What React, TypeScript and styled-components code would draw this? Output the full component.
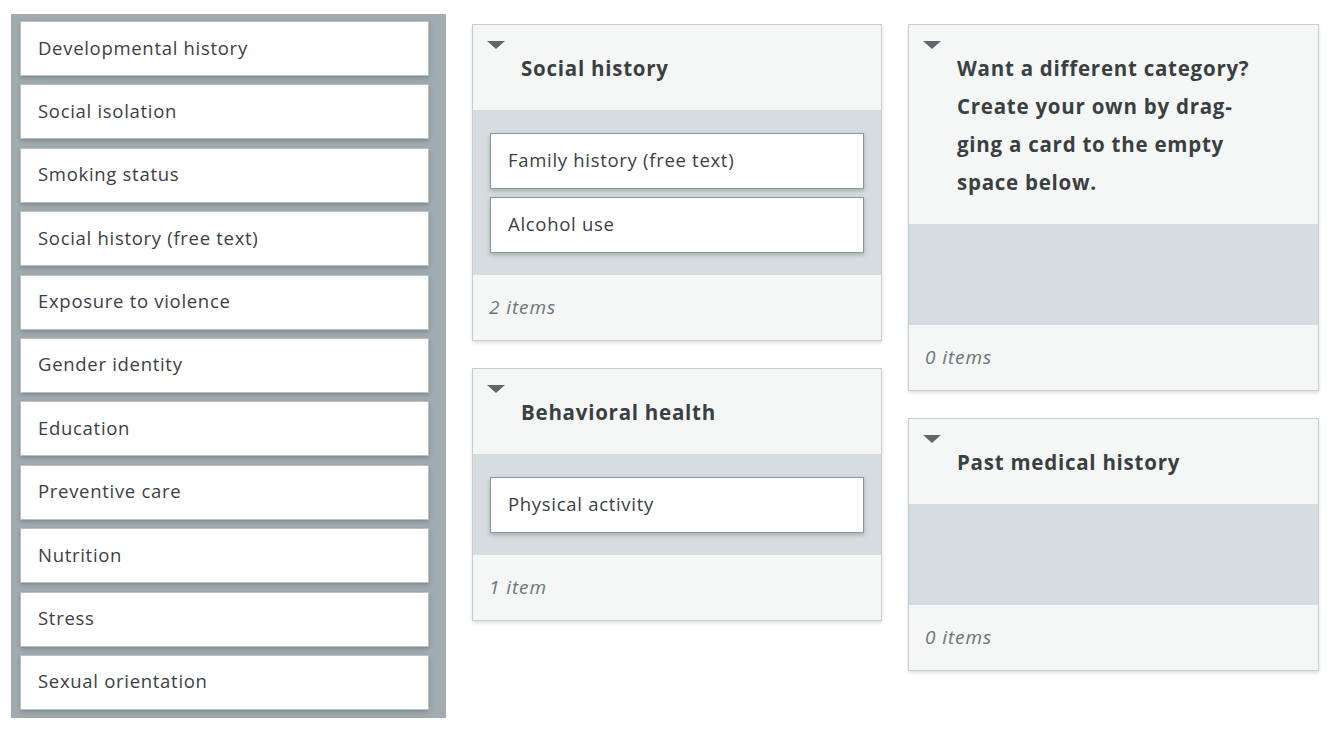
import React from "react";
import styled, { createGlobalStyle } from "styled-components";

const Global = createGlobalStyle`
  html, body { margin: 0; padding: 0; background: #ffffff; }
  body { font-family: "Open Sans", "Noto Sans", sans-serif; color: #3b4245; }
  * { box-sizing: border-box; }
`;

const Page = styled.div`
  display: flex;
  align-items: flex-start;
  gap: 26px;
  padding: 14px 0 0 11px;
  height: 738px;
  overflow: hidden;
`;

const Palette = styled.div`
  width: 435px;
  height: 704px;
  background: #a2acb0;
  padding: 7px 17px 0 9px;
  display: flex;
  flex-direction: column;
  gap: 8.4px;
  overflow: hidden;
  flex-shrink: 0;
`;

const ItemCard = styled.div<{ $inset?: boolean }>`
  flex-shrink: 0;
  height: ${(p) => (p.$inset ? 56 : 55)}px;
  background: #ffffff;
  border: 1px solid ${(p) => (p.$inset ? "#8d979b" : "#b7c0c4")};
  box-shadow: 0 2px 4px rgba(40, 50, 55, 0.28);
  display: flex;
  align-items: center;
  padding: 0 17px 3px;
  font-size: 18.5px;
  letter-spacing: 0.7px;
  color: #3a4144;
`;

const Column = styled.div<{ $w: number }>`
  width: ${(p) => p.$w}px;
  display: flex;
  flex-direction: column;
  gap: 27px;
  padding-top: 10px;
  flex-shrink: 0;
`;

const Category = styled.div`
  border: 1px solid #c6ced1;
  background: #f5f7f7;
  box-shadow: 0 2px 3px rgba(40, 50, 55, 0.15);
`;

const Header = styled.div`
  padding: 16px 16px 23px 14px;
`;

const Toggle = styled.div`
  width: 0;
  height: 0;
  border-left: 9px solid transparent;
  border-right: 9px solid transparent;
  border-top: 8px solid #5f686c;
`;

const Title = styled.div`
  margin-left: 34px;
  font-size: 20.5px;
  font-weight: 700;
  letter-spacing: 0.75px;
  line-height: 38px;
  color: #3a3f42;
  white-space: nowrap;
`;

const DropZone = styled.div`
  background: #d5dde0;
  min-height: 101px;
  padding: 23px 17px 22px;
  display: flex;
  flex-direction: column;
  gap: 8px;
`;

const Footer = styled.div`
  height: 65px;
  display: flex;
  align-items: center;
  padding: 0 16px 1px;
  font-size: 19px;
  letter-spacing: 0.9px;
  font-style: italic;
  color: #6c7579;
`;

const paletteItems = [
  "Developmental history",
  "Social isolation",
  "Smoking status",
  "Social history (free text)",
  "Exposure to violence",
  "Gender identity",
  "Education",
  "Preventive care",
  "Nutrition",
  "Stress",
  "Sexual orientation",
  "",
];

type Cat = { title: string[]; items: string[] };

const CategoryBox = ({ title, items }: Cat) => (
  <Category>
    <Header>
      <Toggle />
      <Title>
        {title.map((line, i) => (
          <React.Fragment key={i}>
            {i > 0 && <br />}
            {line}
          </React.Fragment>
        ))}
      </Title>
    </Header>
    <DropZone>
      {items.map((it) => (
        <ItemCard $inset key={it}>
          {it}
        </ItemCard>
      ))}
    </DropZone>
    <Footer>
      {items.length} {items.length === 1 ? "item" : "items"}
    </Footer>
  </Category>
);

export default function App() {
  return (
    <>
      <Global />
      <Page>
        <Palette>
          {paletteItems.map((it, i) => (
            <ItemCard key={i}>{it}</ItemCard>
          ))}
        </Palette>
        <Column $w={410}>
          <CategoryBox
            title={["Social history"]}
            items={["Family history (free text)", "Alcohol use"]}
          />
          <CategoryBox title={["Behavioral health"]} items={["Physical activity"]} />
        </Column>
        <Column $w={411}>
          <CategoryBox
            title={[
              "Want a different category?",
              "Create your own by drag-",
              "ging a card to the empty",
              "space below.",
            ]}
            items={[]}
          />
          <CategoryBox title={["Past medical history"]} items={[]} />
        </Column>
      </Page>
    </>
  );
}
